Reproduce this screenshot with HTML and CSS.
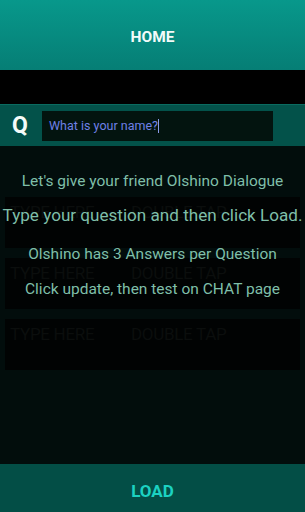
FILE: index.html
```html
<html>
<head>
  <meta charset="utf-8">
  <title>Home</title>
  <link rel="stylesheet" href="styles.css">
</head>
<body>
  <div class="screen">
    <header class="top-bar">HOME</header>
    <div class="gap-band"></div>

    <div class="question-row">
      <span class="q-label">Q</span>
      <div class="q-input">What is your name?<span class="caret"></span></div>
    </div>

    <main class="content">
      <div class="answers">
        <div class="answer-box"><span class="slot">TYPE HERE</span><span>DOUBLE TAP</span></div>
        <div class="answer-box"><span class="slot">TYPE HERE</span><span>DOUBLE TAP</span></div>
        <div class="answer-box"><span class="slot">TYPE HERE</span><span>DOUBLE TAP</span></div>
      </div>

      <div class="hints">
        <p class="hint">Let's give your friend Olshino Dialogue</p>
        <p class="hint big">Type your question and then click Load.</p>
        <p class="hint">Olshino has 3 Answers per Question</p>
        <p class="hint last">Click update, then test on CHAT page</p>
      </div>
    </main>

    <footer class="load-bar">LOAD</footer>
  </div>
</body>
</html>
```

FILE: styles.css
```css
body {
  margin: 0;
  font-family: Roboto, "Liberation Sans", sans-serif;
  background: #020d0c;
}
.screen {
  width: 305px;
  height: 512px;
  display: flex;
  flex-direction: column;
  overflow: hidden;
}
.top-bar {
  height: 70px;
  flex: none;
  display: flex;
  align-items: center;
  justify-content: center;
  background: linear-gradient(180deg, #08988b 0%, #067e75 100%);
  color: #f2fbf9;
  font-weight: 700;
  font-size: 15.5px;
  padding-top: 4px;
  box-sizing: border-box;
}
.gap-band {
  height: 34px;
  flex: none;
  background: #000;
}
.question-row {
  height: 42px;
  flex: none;
  box-sizing: border-box;
  border-top: 1px solid #0a6b60;
  background: #03524a;
  display: flex;
  align-items: center;
  padding: 0 0 0 12px;
}
.q-label {
  width: 30px;
  color: #f4fbf9;
  font-weight: 700;
  font-size: 23px;
  line-height: 1;
}
.q-input {
  width: 231px;
  height: 30px;
  box-sizing: border-box;
  background: #03140f;
  color: #6f80e6;
  font-size: 12.5px;
  padding: 0 7px;
  display: flex;
  align-items: center;
}
.caret {
  width: 1px;
  height: 14px;
  background: #8a9ae8;
}
.content {
  flex: 1;
  position: relative;
}
.answers {
  display: flex;
  flex-direction: column;
  gap: 10px;
  padding: 51px 5px 0;
}
.answer-box {
  height: 51px;
  background: #010303;
  display: flex;
  padding: 5px 5px 0;
  box-sizing: border-box;
  color: #0b0e0d;
  font-size: 17px;
  letter-spacing: -0.3px;
}
.slot {
  width: 121px;
}
.hints {
  position: absolute;
  top: 26px;
  left: 0;
  right: 0;
  text-align: center;
  color: #7fbfa9;
}
.hint {
  margin: 0;
  font-size: 15.5px;
  line-height: 18px;
}
.hint.big {
  font-size: 17.1px;
  line-height: 20px;
  margin-top: 15px;
  white-space: nowrap;
}
.big + .hint {
  margin-top: 20px;
}
.hint.last {
  margin-top: 17px;
}
.load-bar {
  height: 48px;
  flex: none;
  background: #034e46;
  color: #1cd1c1;
  font-weight: 700;
  font-size: 17px;
  padding-top: 6px;
  box-sizing: border-box;
  display: flex;
  align-items: center;
  justify-content: center;
}
```
